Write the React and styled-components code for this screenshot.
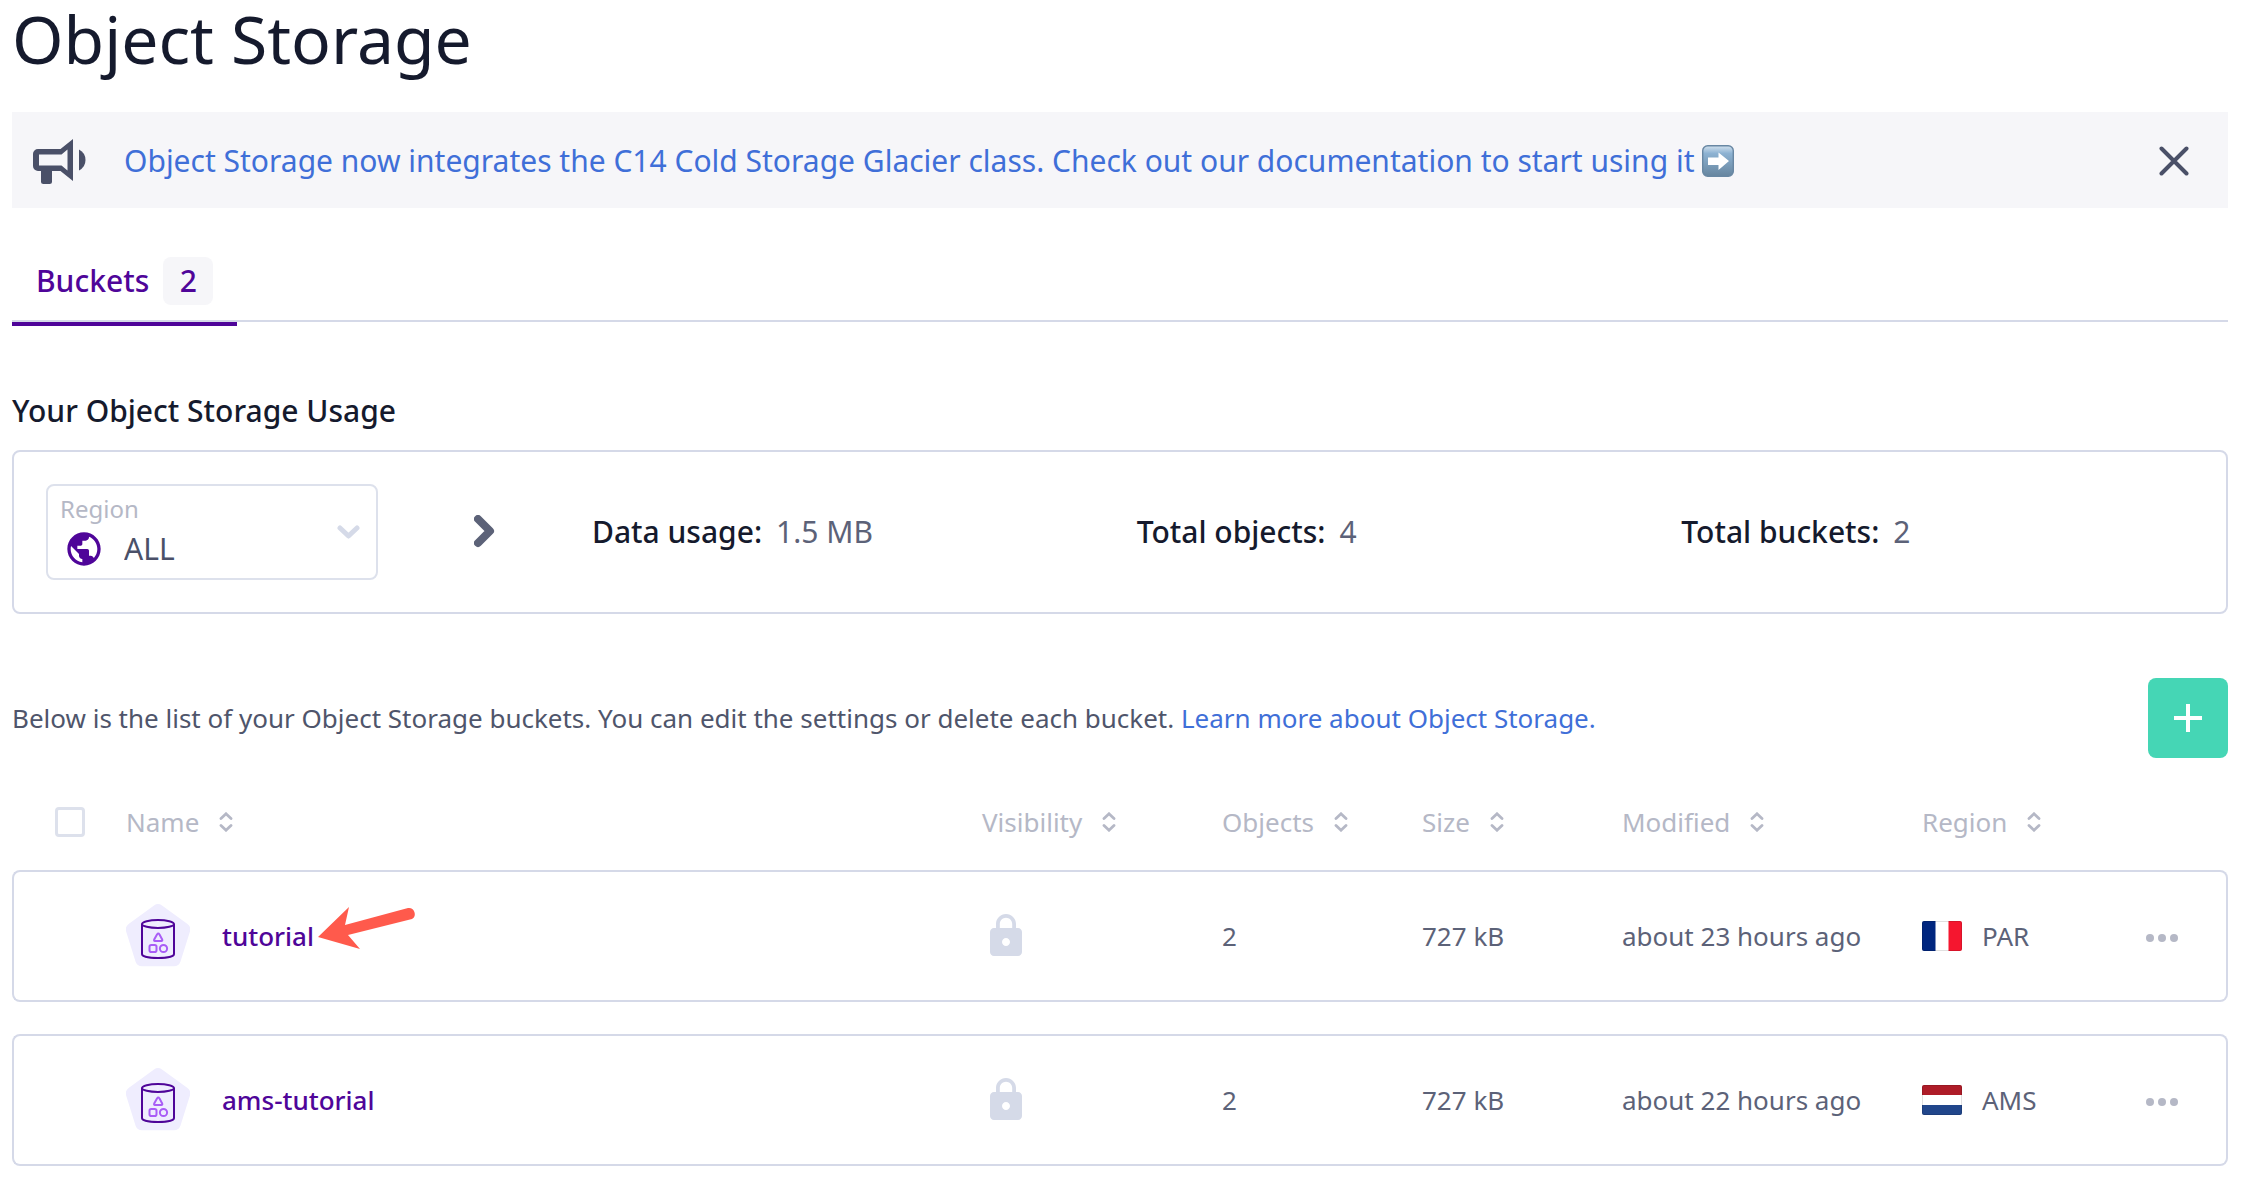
import React from "react";
import styled, { createGlobalStyle } from "styled-components";

const GlobalStyle = createGlobalStyle`
  *, *::before, *::after { box-sizing: border-box; }
  body {
    margin: 0;
    background: #fff;
    color: #5c6278;
    font-family: "Noto Sans", "Open Sans", sans-serif;
    font-size: 26px;
    line-height: 32px;
  }
  button, select, input { font: inherit; color: inherit; }
  svg { display: block; flex: none; }
`;

const border = "#d5d9e8";
const ink = "#151a2d";
const violet = "#4f0599";
const blue = "#3f6fd8";
const muted = "#b5b8c6";

const Page = styled.main`
  padding: 0 14px 12px 12px;
`;

const Title = styled.h1`
  margin: 0;
  padding-bottom: 36px;
  color: ${ink};
  font-size: 66px;
  font-weight: 400;
  line-height: 76px;
`;

const Link = styled.a`
  color: ${blue};
  text-decoration: none;
`;

const Banner = styled.aside`
  display: flex;
  align-items: center;
  min-height: 96px;
  padding: 2px 30px 0 20px;
  background: #f6f6f9;
  font-size: 30px;
  line-height: 40px;
`;

const BannerLink = styled(Link)`
  flex: 1;
  display: flex;
  align-items: center;
  gap: 8px;
  margin-left: 36px;
`;

const IconButton = styled.button`
  display: grid;
  place-items: center;
  width: ${(p) => p.$width};
  height: 48px;
  padding: 0;
  border: 0;
  background: none;
  color: ${(p) => p.$color};
  cursor: pointer;
`;

const Tabs = styled.nav`
  display: flex;
  height: 118px;
  padding-top: 32px;
  background: linear-gradient(${border}, ${border}) 0 112px / 100% 2px no-repeat;
`;

const Tab = styled.button`
  display: flex;
  align-items: center;
  gap: 14px;
  padding: 0 24px;
  border: 0;
  border-bottom: 4px solid ${violet};
  background: none;
  color: ${violet};
  font-size: 30px;
  font-weight: 500;
  cursor: pointer;
`;

const Count = styled.span`
  display: grid;
  place-items: center;
  width: 50px;
  height: 48px;
  border-radius: 8px;
  background: #f6f6f9;
`;

const Heading = styled.h2`
  margin: 64px 0 18px;
  color: ${ink};
  font-size: 30px;
  font-weight: 500;
  line-height: 42px;
`;

const Usage = styled.section`
  display: flex;
  align-items: center;
  min-height: 164px;
  padding-left: 32px;
  border: 2px solid ${border};
  border-radius: 8px;
  font-size: 30px;
  line-height: 40px;
`;

const RegionBox = styled.div`
  display: grid;
  grid-template: 28px 40px / 56px 1fr 24px;
  row-gap: 6px;
  align-items: center;
  align-content: center;
  width: 332px;
  height: 96px;
  padding: 0 16px 0 12px;
  border: 2px solid #dde1ec;
  border-radius: 8px;
`;

const RegionLabel = styled.label`
  grid-column: 1 / 3;
  color: ${muted};
  font-size: 24px;
  line-height: 28px;
`;

const GlobeCell = styled.span`
  grid-area: 2 / 1;
  padding-left: 4px;
`;

const ArrowCell = styled.span`
  grid-area: 1 / 3 / 3 / 4;
`;

const RegionSelect = styled.select`
  grid-area: 2 / 2;
  appearance: none;
  padding: 0 0 0 8px;
  border: 0;
  background: none;
  color: #4a5068;
  line-height: 40px;
`;

const Stats = styled.dl`
  flex: 1;
  display: grid;
  grid-template-columns: repeat(3, 1fr);
  margin: 0 0 0 96px;
`;

const Stat = styled.div`
  display: flex;
  gap: 14px;
  dt { color: ${ink}; font-weight: 500; }
  dd { margin: 0; }
`;

const Chevron = styled.span`
  margin-left: 96px;
`;

const Intro = styled.div`
  display: flex;
  align-items: center;
  justify-content: space-between;
  margin: 64px 0 16px;
  color: #4f556b;
  p { margin: 0; }
`;

const AddButton = styled.button`
  display: grid;
  place-items: center;
  width: 80px;
  height: 80px;
  padding: 0;
  border: 0;
  border-radius: 8px;
  background: #45d6b5;
  cursor: pointer;
`;

const Table = styled.table`
  width: 100%;
  table-layout: fixed;
  border-collapse: separate;
  border-spacing: 0 32px;
  margin: 0 0 -32px;
`;

const HeadCell = styled.th`
  width: ${(p) => p.$width};
  height: 32px;
  padding: 0;
  color: ${muted};
  font-weight: 400;
  text-align: left;
`;

const SortButton = styled.button`
  display: flex;
  align-items: center;
  gap: 20px;
  padding: 0;
  border: 0;
  background: none;
  cursor: pointer;
`;

const Checkbox = styled.input`
  appearance: none;
  display: block;
  width: 30px;
  height: 30px;
  margin: 0 0 0 43px;
  border: 3px solid #dde1ec;
  border-radius: 4px;
  background: #fff;
`;

const Cell = styled.td`
  height: 132px;
  padding: 0;
  border: 2px solid ${border};
  border-width: 2px 0;
  &:first-child { border-left-width: 2px; border-radius: 8px 0 0 8px; }
  &:last-child { border-right-width: 2px; border-radius: 0 8px 8px 0; }
`;

const Inline = styled.div`
  display: flex;
  align-items: center;
  gap: ${(p) => p.$gap};
`;

const NameLink = styled.a`
  position: relative;
  color: ${violet};
  font-weight: 500;
  text-decoration: none;
`;

const Pointer = styled.svg`
  position: absolute;
  left: 100%;
  top: -14px;
`;

const Megaphone = () => (
  <svg width="56" height="56" viewBox="0 0 56 56" aria-hidden="true">
    <path d="M6 16h22.500L41 6v42L28.500 38H20v10.500a2.500 2.500 0 0 1-2.500 2.500h-6A2.500 2.500 0 0 1 9 48.500V38H6a5 5 0 0 1-5-5V21a5 5 0 0 1 5-5z" fill="#4a5068" />
    <path d="M7 21.500h22.500l6-5v21l-6-5H7z" fill="#f6f6f9" />
    <path d="M47 16.500q6.500 3.500 6.500 10.500T47 37.500z" fill="#4a5068" />
  </svg>
);

const RightArrowBadge = () => (
  <svg width="32" height="32" viewBox="0 0 32 32" role="img" aria-label="right arrow">
    <defs>
      <linearGradient id="badge" x1="0" y1="0" x2="0" y2="1">
        <stop offset="0" stopColor="#d3e2ef" />
        <stop offset="0.25" stopColor="#8db2d2" />
        <stop offset="1" stopColor="#66859f" />
      </linearGradient>
    </defs>
    <rect x="0.700" y="0.700" width="30.600" height="30.600" rx="5" fill="url(#badge)" stroke="#6887a3" strokeWidth="1.400" />
    <path d="M6 12.500h10.500V7.500L27 16 16.500 25v-5H6z" fill="#fff" />
  </svg>
);

const Close = () => (
  <svg width="30" height="30" viewBox="0 0 30 30" fill="none" stroke="currentColor" strokeWidth="4" strokeLinecap="round" aria-hidden="true">
    <path d="M2.500 2.500l25 25M27.500 2.500l-25 25" />
  </svg>
);

const Globe = () => (
  <svg width="40" height="40" viewBox="0 0 24 24" fill={violet} aria-hidden="true">
    <path d="M12 2C6.480 2 2 6.480 2 12s4.480 10 10 10 10-4.480 10-10S17.520 2 12 2zm-1 17.930c-3.950-.490-7-3.850-7-7.930 0-.620.080-1.210.210-1.790L9 15v1c0 1.100.900 2 2 2v1.930zm6.900-2.540c-.260-.810-1-1.390-1.900-1.390h-1v-3c0-.550-.450-1-1-1H8v-2h2c.550 0 1-.450 1-1V7h2c1.100 0 2-.900 2-2v-.410c2.930 1.190 5 4.060 5 7.410 0 2.080-.800 3.970-2.100 5.390z" />
  </svg>
);

const SortIcon = () => (
  <svg width="14" height="20" viewBox="0 0 14 20" fill="none" stroke="currentColor" strokeWidth="2.800" strokeLinecap="round" aria-hidden="true">
    <path d="M2 6.500l5-4.700 5 4.700M2 13.500l5 4.700 5-4.700" />
  </svg>
);

const Lock = () => (
  <svg width="48" height="48" viewBox="0 0 24 24" fill="#d5dae8" role="img" aria-label="Private">
    <path d="M18 8h-1V6c0-2.760-2.240-5-5-5S7 3.240 7 6v2H6c-1.100 0-2 .900-2 2v10c0 1.100.900 2 2 2h12c1.100 0 2-.900 2-2V10c0-1.100-.900-2-2-2zm-6 9c-1.100 0-2-.900-2-2s.900-2 2-2 2 .900 2 2-.900 2-2 2zm3.100-9H8.900V6c0-1.710 1.390-3.100 3.100-3.100s3.100 1.390 3.100 3.100v2z" />
  </svg>
);

const BucketIcon = () => (
  <svg width="64" height="64" viewBox="0 0 64 64" fill="none" aria-hidden="true">
    <path d="M28 1.500a7 7 0 0 1 8 0L61.500 20a7 7 0 0 1 2.300 8L54.500 57.500a7 7 0 0 1-6.500 4.700H16a7 7 0 0 1-6.500-4.700L.300 28a7 7 0 0 1 2.300-8z" fill="#efedfe" />
    <g stroke={violet} strokeWidth="2">
      <ellipse cx="32" cy="20" rx="16" ry="4" />
      <path d="M16 20v30c0 2.500 7 4 16 4s16-1.500 16-4V20" />
    </g>
    <g stroke="#a95df6" strokeWidth="2" strokeLinejoin="round">
      <path d="M31 30.500q1.300-1.800 2.500 0l2.700 5q.500 1.500-.800 1.500h-6.500q-1.200 0-.700-1.500z" />
      <rect x="23.500" y="41" width="7" height="7" rx="1.800" />
      <circle cx="37.500" cy="44.500" r="3.600" />
    </g>
  </svg>
);

const FlagSvg = ({ label, children }) => (
  <svg width="40" height="30" viewBox="0 0 40 30" role="img" aria-label={label}>
    {children}
    <rect x="0.500" y="0.500" width="39" height="29" rx="1.500" fill="none" stroke="#000" strokeOpacity="0.120" />
  </svg>
);

const flags = {
  PAR: (
    <FlagSvg label="France">
      <rect width="40" height="30" rx="2" fill="#fff" />
      <path d="M2 0h11.500v30H2a2 2 0 0 1-2-2V2a2 2 0 0 1 2-2z" fill="#00267f" />
      <path d="M26.500 0H38a2 2 0 0 1 2 2v26a2 2 0 0 1-2 2H26.500z" fill="#f5162f" />
    </FlagSvg>
  ),
  AMS: (
    <FlagSvg label="Netherlands">
      <rect width="40" height="30" rx="2" fill="#fff" />
      <path d="M2 0h36a2 2 0 0 1 2 2v8H0V2a2 2 0 0 1 2-2z" fill="#ae1c28" />
      <path d="M0 20h40v8a2 2 0 0 1-2 2H2a2 2 0 0 1-2-2z" fill="#21468b" />
    </FlagSvg>
  ),
};

const Dots = () => (
  <svg width="32" height="12" viewBox="0 0 32 12" fill="currentColor" aria-hidden="true">
    <circle cx="4" cy="8" r="4" />
    <circle cx="16" cy="8" r="4" />
    <circle cx="28" cy="8" r="4" />
  </svg>
);

const PointerArrow = () => (
  <Pointer width="104" height="44" viewBox="0 0 104 44" aria-hidden="true">
    <path d="M4 31L35 1l-4 18L94 2a6 6 0 0 1 4 11L34 29l12 14z" fill="#ff5a4c" />
  </Pointer>
);

const columns = [
  ["Name", "auto"],
  ["Visibility", "240px"],
  ["Objects", "200px"],
  ["Size", "200px"],
  ["Modified", "300px"],
  ["Region", "224px"],
];

const buckets = [
  { name: "tutorial", objects: 2, size: "727 kB", modified: "about 23 hours ago", region: "PAR", highlighted: true },
  { name: "ams-tutorial", objects: 2, size: "727 kB", modified: "about 22 hours ago", region: "AMS" },
];

const stats = [
  ["Data usage:", "1.5 MB"],
  ["Total objects:", "4"],
  ["Total buckets:", "2"],
];

export default function App() {
  return (
    <>
      <GlobalStyle />
      <Page>
        <Title>Object Storage</Title>
        <Banner>
          <Megaphone />
          <BannerLink href="#docs">
            Object Storage now integrates the C14 Cold Storage Glacier class. Check out our documentation to start using it
            <RightArrowBadge />
          </BannerLink>
          <IconButton $width="48px" $color="#4a5068" aria-label="Dismiss"><Close /></IconButton>
        </Banner>
        <Tabs>
          <Tab>Buckets <Count>2</Count></Tab>
        </Tabs>
        <Heading>Your Object Storage Usage</Heading>
        <Usage>
          <RegionBox>
            <RegionLabel htmlFor="region">Region</RegionLabel>
            <GlobeCell><Globe /></GlobeCell>
            <RegionSelect id="region"><option>ALL</option></RegionSelect>
            <ArrowCell>
              <svg width="24" height="14" viewBox="0 0 24 14" fill="none" stroke="#d5dae8" strokeWidth="5" strokeLinecap="round" strokeLinejoin="round" aria-hidden="true">
                <path d="M4 3l8.500 8L21 3" />
              </svg>
            </ArrowCell>
          </RegionBox>
          <Chevron>
            <svg width="22" height="34" viewBox="0 0 22 34" fill="none" stroke="#5c6278" strokeWidth="8" strokeLinecap="round" strokeLinejoin="round" aria-hidden="true">
              <path d="M4 4l12 12L4 28" />
            </svg>
          </Chevron>
          <Stats>
            {stats.map(([label, value]) => (
              <Stat key={label}><dt>{label}</dt><dd>{value}</dd></Stat>
            ))}
          </Stats>
        </Usage>
        <Intro>
          <p>
            Below is the list of your Object Storage buckets. You can edit the settings or delete each bucket.{" "}
            <Link href="#learn">Learn more about Object Storage.</Link>
          </p>
          <AddButton aria-label="Create bucket">
            <svg width="28" height="28" viewBox="0 0 28 28" stroke="#fff" strokeWidth="4" aria-hidden="true">
              <path d="M14 0v28M0 14h28" />
            </svg>
          </AddButton>
        </Intro>
        <Table>
          <thead>
            <tr>
              <HeadCell $width="114px"><Checkbox type="checkbox" aria-label="Select all buckets" /></HeadCell>
              {columns.map(([label, width]) => (
                <HeadCell key={label} $width={width}><SortButton>{label}<SortIcon /></SortButton></HeadCell>
              ))}
              <HeadCell $width="82px" />
            </tr>
          </thead>
          <tbody>
            {buckets.map((b) => (
              <tr key={b.name}>
                <Cell />
                <Cell>
                  <Inline $gap="32px">
                    <BucketIcon />
                    <NameLink href={"#" + b.name}>{b.name}{b.highlighted && <PointerArrow />}</NameLink>
                  </Inline>
                </Cell>
                <Cell><Lock /></Cell>
                <Cell>{b.objects}</Cell>
                <Cell>{b.size}</Cell>
                <Cell>{b.modified}</Cell>
                <Cell><Inline $gap="20px">{flags[b.region]}{b.region}</Inline></Cell>
                <Cell><IconButton $width="32px" $color={muted} aria-label={"Actions for " + b.name}><Dots /></IconButton></Cell>
              </tr>
            ))}
          </tbody>
        </Table>
      </Page>
    </>
  );
}
